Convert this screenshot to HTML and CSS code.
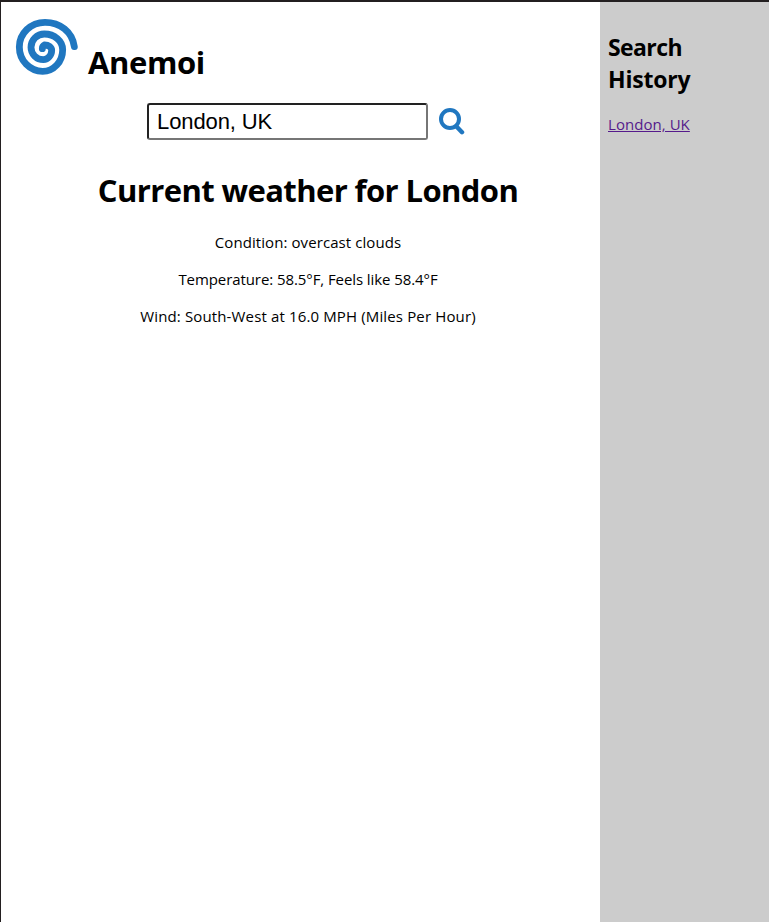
FILE: index.html
```html
<!DOCTYPE html>
<html lang="en">
<head>
<meta charset="utf-8">
<title>Anemoi</title>
<link rel="stylesheet" href="styles.css">
</head>
<body>
<div class="app">
  <main class="main">
    <header class="brand">
      <svg class="logo" viewBox="0 0 216 204" fill="none" stroke="#2077c0" stroke-width="20.5" stroke-linecap="round"><path d="M193 104C187 59 150 31 105 31A77 74 0 0 0 28 105A70 73 0 0 0 98 178A60 65 0 0 0 158 113A55 47 0 0 0 103 66A40 40 0 0 0 63 106A37 37 0 0 0 100 143A26 28 0 0 0 125 115A21 16 0 0 0 104 99Q97 102 97 110"/></svg>
      <h1 class="name">Anemoi</h1>
    </header>
    <form class="search">
      <input class="query" type="text" value="London, UK" aria-label="City">
      <svg class="glass" viewBox="0 0 26 27" fill="none" stroke="#2077c0"><circle cx="11" cy="11" r="9" stroke-width="4"/><path d="M17.5 18.5L23 24.2" stroke-width="4.5" stroke-linecap="round"/></svg>
    </form>
    <section class="weather">
      <h1 class="title">Current weather for London</h1>
      <p class="condition">Condition: overcast clouds</p>
      <p class="temperature">Temperature: 58.5°F, Feels like 58.4°F</p>
      <p class="wind">Wind: South-West at 16.0 MPH (Miles Per Hour)</p>
    </section>
  </main>
  <aside class="history">
    <h2><span class="first">Search</span> History</h2>
    <a href="#">London, UK</a>
  </aside>
</div>
</body>
</html>
```
FILE: styles.css
```css
* { box-sizing: border-box; }
body {
  margin: 0;
  font-family: "Open Sans", "Noto Sans", sans-serif;
  font-size: 15px;
  font-weight: 400;
  color: #000;
}
.app {
  display: flex;
  height: 922px;
  border-top: 2px solid #231f20;
  border-left: 1px solid #231f20;
}
.main { width: 599px; padding: 10px 0 0 8px; }
.brand { display: flex; height: 68px; }
.logo { width: 72px; height: 68px; margin-left: 1px; }
h1, h2, p { margin: 0; white-space: nowrap; }
h1 { font-size: 31px; line-height: 43px; font-weight: 700; letter-spacing: -0.6px; }
.name { margin: 29px 0 0 6px; letter-spacing: -0.4px; }
.search { display: flex; margin: 23px 0 0 138px; height: 37px; }
.query {
  width: 281px;
  height: 37px;
  padding: 1px 8px;
  border: 2px solid;
  border-radius: 3px;
  border-color: #222 #767676 #767676 #222;
  font: 22px "Liberation Sans", sans-serif;
  letter-spacing: -0.1px;
  color: #000;
  background: #fff;
  outline: none;
}
.glass { width: 26px; height: 27px; margin: 5px 0 0 11px; }
.weather { text-align: center; padding: 29px 0 0 7px; }
.weather p { line-height: 21px; margin-bottom: 16px; }
.weather .title { margin-bottom: 20px; }
.condition { letter-spacing: 0.08px; }
.temperature { letter-spacing: -0.08px; }
.wind { letter-spacing: 0.14px; }
.history { flex: 1; background: #ccc; padding: 29px 8px; }
.history h2 { font-size: 23px; line-height: 32px; font-weight: 700; white-space: normal; margin-bottom: 19px; letter-spacing: -0.2px; }
.history .first { letter-spacing: -0.6px; }
.history a { color: #551a8b; line-height: 21px; letter-spacing: 0.05px; }
```
